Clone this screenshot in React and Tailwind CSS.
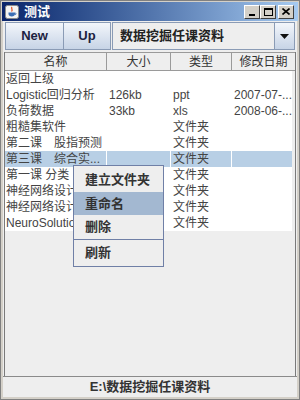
import React from 'react';

const cjk = { fontFamily: '"Liberation Sans", "Noto Sans CJK SC", sans-serif' };

const rows = [
  { name: '返回上级', size: '', type: '', date: '' },
  { name: 'Logistic回归分析', size: '126kb', type: 'ppt', date: '2007-07-...' },
  { name: '负荷数据', size: '33kb', type: 'xls', date: '2008-06-...' },
  { name: '粗糙集软件', size: '', type: '文件夹', date: '' },
  { name: '第二课　股指预测', size: '', type: '文件夹', date: '' },
  { name: '第三课　综合实...', size: '', type: '文件夹', date: '', selected: true },
  { name: '第一课 分类', size: '', type: '文件夹', date: '', under: true },
  { name: '神经网络设计', size: '', type: '文件夹', date: '', under: true },
  { name: '神经网络设计', size: '', type: '文件夹', date: '', under: true },
  { name: 'NeuroSolutions', size: '', type: '文件夹', date: '', under: true },
];

const JavaIcon = () => (
  <svg width="14" height="14" viewBox="0 0 14 14">
    <rect x="0.5" y="0.5" width="13" height="13" rx="2" fill="#f4f4f4" stroke="#8a8a8a" />
    <path d="M7 2 C5.5 3.5 8.5 4.5 6.5 6.5" stroke="#e2572b" strokeWidth="1.3" fill="none" />
    <path d="M3.5 7.5 h6.5 v1.5 c0 1.5 -1.5 2.5 -3.2 2.5 c-1.8 0 -3.3 -1 -3.3 -2.5z" fill="#3b6db3" />
    <path d="M10 8 c1.5 0 1.5 1.6 0 1.6" stroke="#3b6db3" strokeWidth="0.9" fill="none" />
  </svg>
);

const TitleButton = ({ children }) => (
  <div className="w-[16px] h-[14px] bg-[#d4d0c8] border border-t-white border-l-white border-r-[#404040] border-b-[#404040] flex items-center justify-center">
    {children}
  </div>
);

const ToolButton = ({ children, className }) => (
  <div
    className={`h-full flex items-center justify-center border border-[#8a9bb5] bg-gradient-to-b from-[#f3f6fb] to-[#c7d4e6] text-[13px] font-bold text-[#1c2240] ${className}`}
  >
    {children}
  </div>
);

export default function App() {
  return (
    <div className="relative w-[300px] h-[400px] bg-[#d4d0c8] flex flex-col border border-[#808080]" style={cjk}>
      {/* title bar */}
      <div className="h-[19px] mx-[1px] mt-[1px] flex items-center bg-gradient-to-r from-[#0a246a] to-[#a6caf0] pl-[3px] pr-[4px]">
        <JavaIcon />
        <span className="ml-[5px] text-white font-bold text-[13px] leading-none">测试</span>
        <div className="flex-1" />
        <div className="flex">
          <TitleButton>
            <div className="w-[6px] h-[2px] bg-black mt-[6px]" />
          </TitleButton>
          <TitleButton>
            <div className="w-[9px] h-[8px] border border-black border-t-2" />
          </TitleButton>
          <div className="w-[2px]" />
          <TitleButton>
            <svg width="8" height="7" viewBox="0 0 8 7">
              <path d="M0.5 0.5 L7.5 6.5 M7.5 0.5 L0.5 6.5" stroke="black" strokeWidth="1.6" />
            </svg>
          </TitleButton>
        </div>
      </div>

      {/* content */}
      <div className="flex-1 mx-[2px] mb-[2px] flex flex-col bg-[#eeeeee]">
        {/* toolbar */}
        <div className="h-[28px] mt-[1px] flex px-[2px]">
          <ToolButton className="w-[59px]">New</ToolButton>
          <ToolButton className="w-[47px] border-l-0">Up</ToolButton>
          <div className="flex-1 flex border border-[#8a9bb5] ml-[1px]">
            <div className="flex-1 flex items-center pl-[7px] bg-[#eeeeee] text-[13px] font-bold text-[#222]">
              数据挖掘任课资料
            </div>
            <div className="w-[20px] flex items-center justify-center border-l border-[#8a9bb5] bg-gradient-to-b from-[#f3f6fb] to-[#c7d4e6]">
              <svg width="9" height="5" viewBox="0 0 9 5">
                <path d="M0 0 H9 L4.5 5 Z" fill="#111" />
              </svg>
            </div>
          </div>
        </div>

        {/* table */}
        <div className="flex-1 mt-[2px] mx-[1px] flex flex-col border-l border-r border-[#7a7a7a]">
          <div className="h-[19px] flex border-t border-b border-[#9a9a9a] bg-[#eeeeee] text-[12px] text-[#333]">
            <div className="w-[102px] flex items-center justify-center border-r border-[#9a9a9a]">名称</div>
            <div className="w-[64px] flex items-center justify-center border-r border-[#9a9a9a]">大小</div>
            <div className="w-[61px] flex items-center justify-center border-r border-[#9a9a9a]">类型</div>
            <div className="flex-1 flex items-center justify-center">修改日期</div>
          </div>
          <div className="flex flex-col bg-white mr-[3px]">
            {rows.map((r, i) => (
              <div
                key={i}
                className="h-[16px] flex text-[12px] leading-[16px] text-[#444] whitespace-nowrap"
              >
                <div className={`w-[102px] pl-[1px] overflow-hidden text-ellipsis border-r border-white ${r.selected ? 'bg-[#b8cfe5]' : ''}`}>
                  {r.under ? <span className="block w-[68px] overflow-hidden">{r.name}</span> : r.name}
                </div>
                <div className={`w-[64px] pl-[2px] border-r border-white ${r.selected ? 'bg-[#b8cfe5]' : ''}`}>{r.size}</div>
                <div className={`w-[61px] pl-[2px] border-r border-white ${r.selected ? 'bg-[#b8cfe5]' : ''}`}>{r.type}</div>
                <div className={`flex-1 pl-[2px] overflow-hidden ${r.selected ? 'bg-[#b8cfe5]' : ''}`}>{r.date}</div>
              </div>
            ))}
          </div>
          <div className="flex-1 bg-[#eeeeee]" />
        </div>

        {/* status */}
        <div className="h-[21px] flex items-center justify-center border-t border-[#8a8a8a] text-[13px] font-bold text-[#333]">
          E:\数据挖掘任课资料
        </div>
      </div>

      {/* popup menu */}
      <div className="absolute left-[72px] top-[164px] w-[91px] bg-[#eeeeee] border border-[#6f7fa6] py-[1px] flex flex-col text-[13px] font-bold text-[#333]">
        <div className="h-[25px] flex items-center pl-[11px]">建立文件夹</div>
        <div className="h-[23px] flex items-center pl-[11px] bg-[#a3b8d1]">重命名</div>
        <div className="h-[24px] flex items-center pl-[11px]">删除</div>
        <div className="h-[1px] bg-[#6f7fa6]" />
        <div className="h-[25px] flex items-center pl-[11px]">刷新</div>
      </div>
    </div>
  );
}
